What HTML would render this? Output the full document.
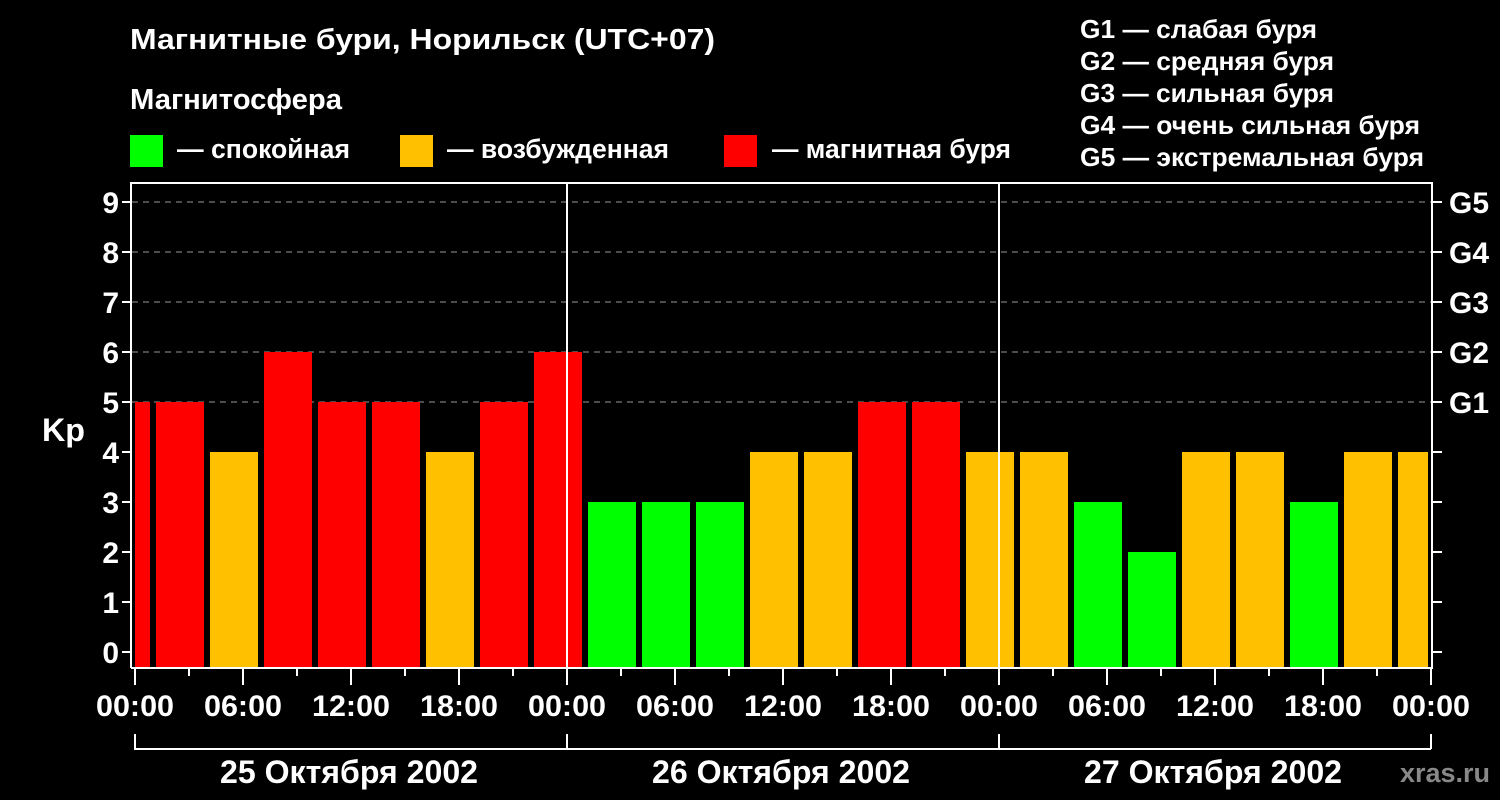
<!DOCTYPE html>
<html><head><meta charset="utf-8"><style>
html,body{margin:0;padding:0;background:#000;}
svg{display:block;font-family:"Liberation Sans",sans-serif;font-weight:bold;}
</style></head><body>
<svg width="1500" height="800" xmlns="http://www.w3.org/2000/svg">
<rect width="1500" height="800" fill="#000"/>
<g fill="#fff">
<text x="130" y="49" font-size="29" textLength="585" lengthAdjust="spacingAndGlyphs">Магнитные бури, Норильск (UTC+07)</text>
<text x="130" y="109" font-size="29" textLength="212" lengthAdjust="spacingAndGlyphs">Магнитосфера</text>
<text x="177" y="158" font-size="27" textLength="173" lengthAdjust="spacingAndGlyphs">— спокойная</text>
<text x="447" y="158" font-size="27" textLength="222" lengthAdjust="spacingAndGlyphs">— возбужденная</text>
<text x="772" y="158" font-size="27" textLength="239" lengthAdjust="spacingAndGlyphs">— магнитная буря</text>
<text x="1080" y="38" font-size="26" textLength="237" lengthAdjust="spacingAndGlyphs">G1 — слабая буря</text>
<text x="1080" y="70" font-size="26" textLength="254" lengthAdjust="spacingAndGlyphs">G2 — средняя буря</text>
<text x="1080" y="102" font-size="26" textLength="254" lengthAdjust="spacingAndGlyphs">G3 — сильная буря</text>
<text x="1080" y="134" font-size="26" textLength="340" lengthAdjust="spacingAndGlyphs">G4 — очень сильная буря</text>
<text x="1080" y="166" font-size="26" textLength="344" lengthAdjust="spacingAndGlyphs">G5 — экстремальная буря</text>
</g>
<rect x="130" y="135" width="33" height="32" fill="#00ff00"/>
<rect x="400" y="135" width="33" height="32" fill="#ffc000"/>
<rect x="724" y="135" width="33" height="32" fill="#ff0000"/>

<g stroke="#999" stroke-width="1" stroke-dasharray="6,5">
<line x1="132" y1="202" x2="1431" y2="202"/>
<line x1="132" y1="252" x2="1431" y2="252"/>
<line x1="132" y1="302" x2="1431" y2="302"/>
<line x1="132" y1="352" x2="1431" y2="352"/>
<line x1="132" y1="402" x2="1431" y2="402"/>
</g>

<g>
<rect x="135" y="402" width="15" height="266" fill="#ff0000"/>
<rect x="156" y="402" width="48" height="266" fill="#ff0000"/>
<rect x="210" y="452" width="48" height="216" fill="#ffc000"/>
<rect x="264" y="352" width="48" height="316" fill="#ff0000"/>
<rect x="318" y="402" width="48" height="266" fill="#ff0000"/>
<rect x="372" y="402" width="48" height="266" fill="#ff0000"/>
<rect x="426" y="452" width="48" height="216" fill="#ffc000"/>
<rect x="480" y="402" width="48" height="266" fill="#ff0000"/>
<rect x="534" y="352" width="48" height="316" fill="#ff0000"/>
<rect x="588" y="502" width="48" height="166" fill="#00ff00"/>
<rect x="642" y="502" width="48" height="166" fill="#00ff00"/>
<rect x="696" y="502" width="48" height="166" fill="#00ff00"/>
<rect x="750" y="452" width="48" height="216" fill="#ffc000"/>
<rect x="804" y="452" width="48" height="216" fill="#ffc000"/>
<rect x="858" y="402" width="48" height="266" fill="#ff0000"/>
<rect x="912" y="402" width="48" height="266" fill="#ff0000"/>
<rect x="966" y="452" width="48" height="216" fill="#ffc000"/>
<rect x="1020" y="452" width="48" height="216" fill="#ffc000"/>
<rect x="1074" y="502" width="48" height="166" fill="#00ff00"/>
<rect x="1128" y="552" width="48" height="116" fill="#00ff00"/>
<rect x="1182" y="452" width="48" height="216" fill="#ffc000"/>
<rect x="1236" y="452" width="48" height="216" fill="#ffc000"/>
<rect x="1290" y="502" width="48" height="166" fill="#00ff00"/>
<rect x="1344" y="452" width="48" height="216" fill="#ffc000"/>
<rect x="1398" y="452" width="30" height="216" fill="#ffc000"/>
</g>

<g stroke="#fff" stroke-width="2" fill="none">
<path d="M131 668 V183 H1432 V668 H131"/>
<line x1="567" y1="183" x2="567" y2="668"/>
<line x1="999" y1="183" x2="999" y2="668"/>
<path d="M122 202H131M122 252H131M122 302H131M122 352H131M122 402H131M122 452H131M122 502H131M122 552H131M122 602H131M122 652H131"/>
<path d="M1432 202H1442M1432 252H1442M1432 302H1442M1432 352H1442M1432 402H1442M1432 452H1442M1432 502H1442M1432 552H1442M1432 602H1442M1432 652H1442"/>
<path d="M135 668V685M189 668V676M243 668V685M297 668V676M351 668V685M405 668V676M459 668V685M513 668V676M567 668V685M621 668V676M675 668V685M729 668V676M783 668V685M837 668V676M891 668V685M945 668V676M999 668V685M1053 668V676M1107 668V685M1161 668V676M1215 668V685M1269 668V676M1323 668V685M1377 668V676M1431 668V685"/>
<path d="M135 734V749H1431M567 734V749M999 734V749M1431 734V749"/>
</g>

<g fill="#fff" font-size="30" text-anchor="end">
<text x="119" y="213">9</text><text x="119" y="263">8</text><text x="119" y="313">7</text>
<text x="119" y="363">6</text><text x="119" y="413">5</text><text x="119" y="463">4</text>
<text x="119" y="513">3</text><text x="119" y="563">2</text><text x="119" y="613">1</text>
<text x="119" y="663">0</text>
</g>
<text x="42" y="441" fill="#fff" font-size="32" textLength="43" lengthAdjust="spacingAndGlyphs">Kp</text>
<g fill="#fff" font-size="30">
<text x="1449" y="213">G5</text><text x="1449" y="263">G4</text><text x="1449" y="313">G3</text>
<text x="1449" y="363">G2</text><text x="1449" y="413">G1</text>
</g>
<g fill="#fff" font-size="30" text-anchor="middle">
<text x="135" y="716" textLength="78" lengthAdjust="spacingAndGlyphs">00:00</text><text x="243" y="716" textLength="78" lengthAdjust="spacingAndGlyphs">06:00</text><text x="351" y="716" textLength="78" lengthAdjust="spacingAndGlyphs">12:00</text><text x="459" y="716" textLength="78" lengthAdjust="spacingAndGlyphs">18:00</text>
<text x="567" y="716" textLength="78" lengthAdjust="spacingAndGlyphs">00:00</text><text x="675" y="716" textLength="78" lengthAdjust="spacingAndGlyphs">06:00</text><text x="783" y="716" textLength="78" lengthAdjust="spacingAndGlyphs">12:00</text><text x="891" y="716" textLength="78" lengthAdjust="spacingAndGlyphs">18:00</text>
<text x="999" y="716" textLength="78" lengthAdjust="spacingAndGlyphs">00:00</text><text x="1107" y="716" textLength="78" lengthAdjust="spacingAndGlyphs">06:00</text><text x="1215" y="716" textLength="78" lengthAdjust="spacingAndGlyphs">12:00</text><text x="1323" y="716" textLength="78" lengthAdjust="spacingAndGlyphs">18:00</text>
<text x="1431" y="716" textLength="78" lengthAdjust="spacingAndGlyphs">00:00</text>
<text x="349" y="783" font-size="32" textLength="258" lengthAdjust="spacingAndGlyphs">25 Октября 2002</text>
<text x="781" y="783" font-size="32" textLength="258" lengthAdjust="spacingAndGlyphs">26 Октября 2002</text>
<text x="1213" y="783" font-size="32" textLength="258" lengthAdjust="spacingAndGlyphs">27 Октября 2002</text>
</g>
<text x="1490" y="782" fill="#888" font-size="27" text-anchor="end">xras.ru</text>
</svg>
</body></html>
